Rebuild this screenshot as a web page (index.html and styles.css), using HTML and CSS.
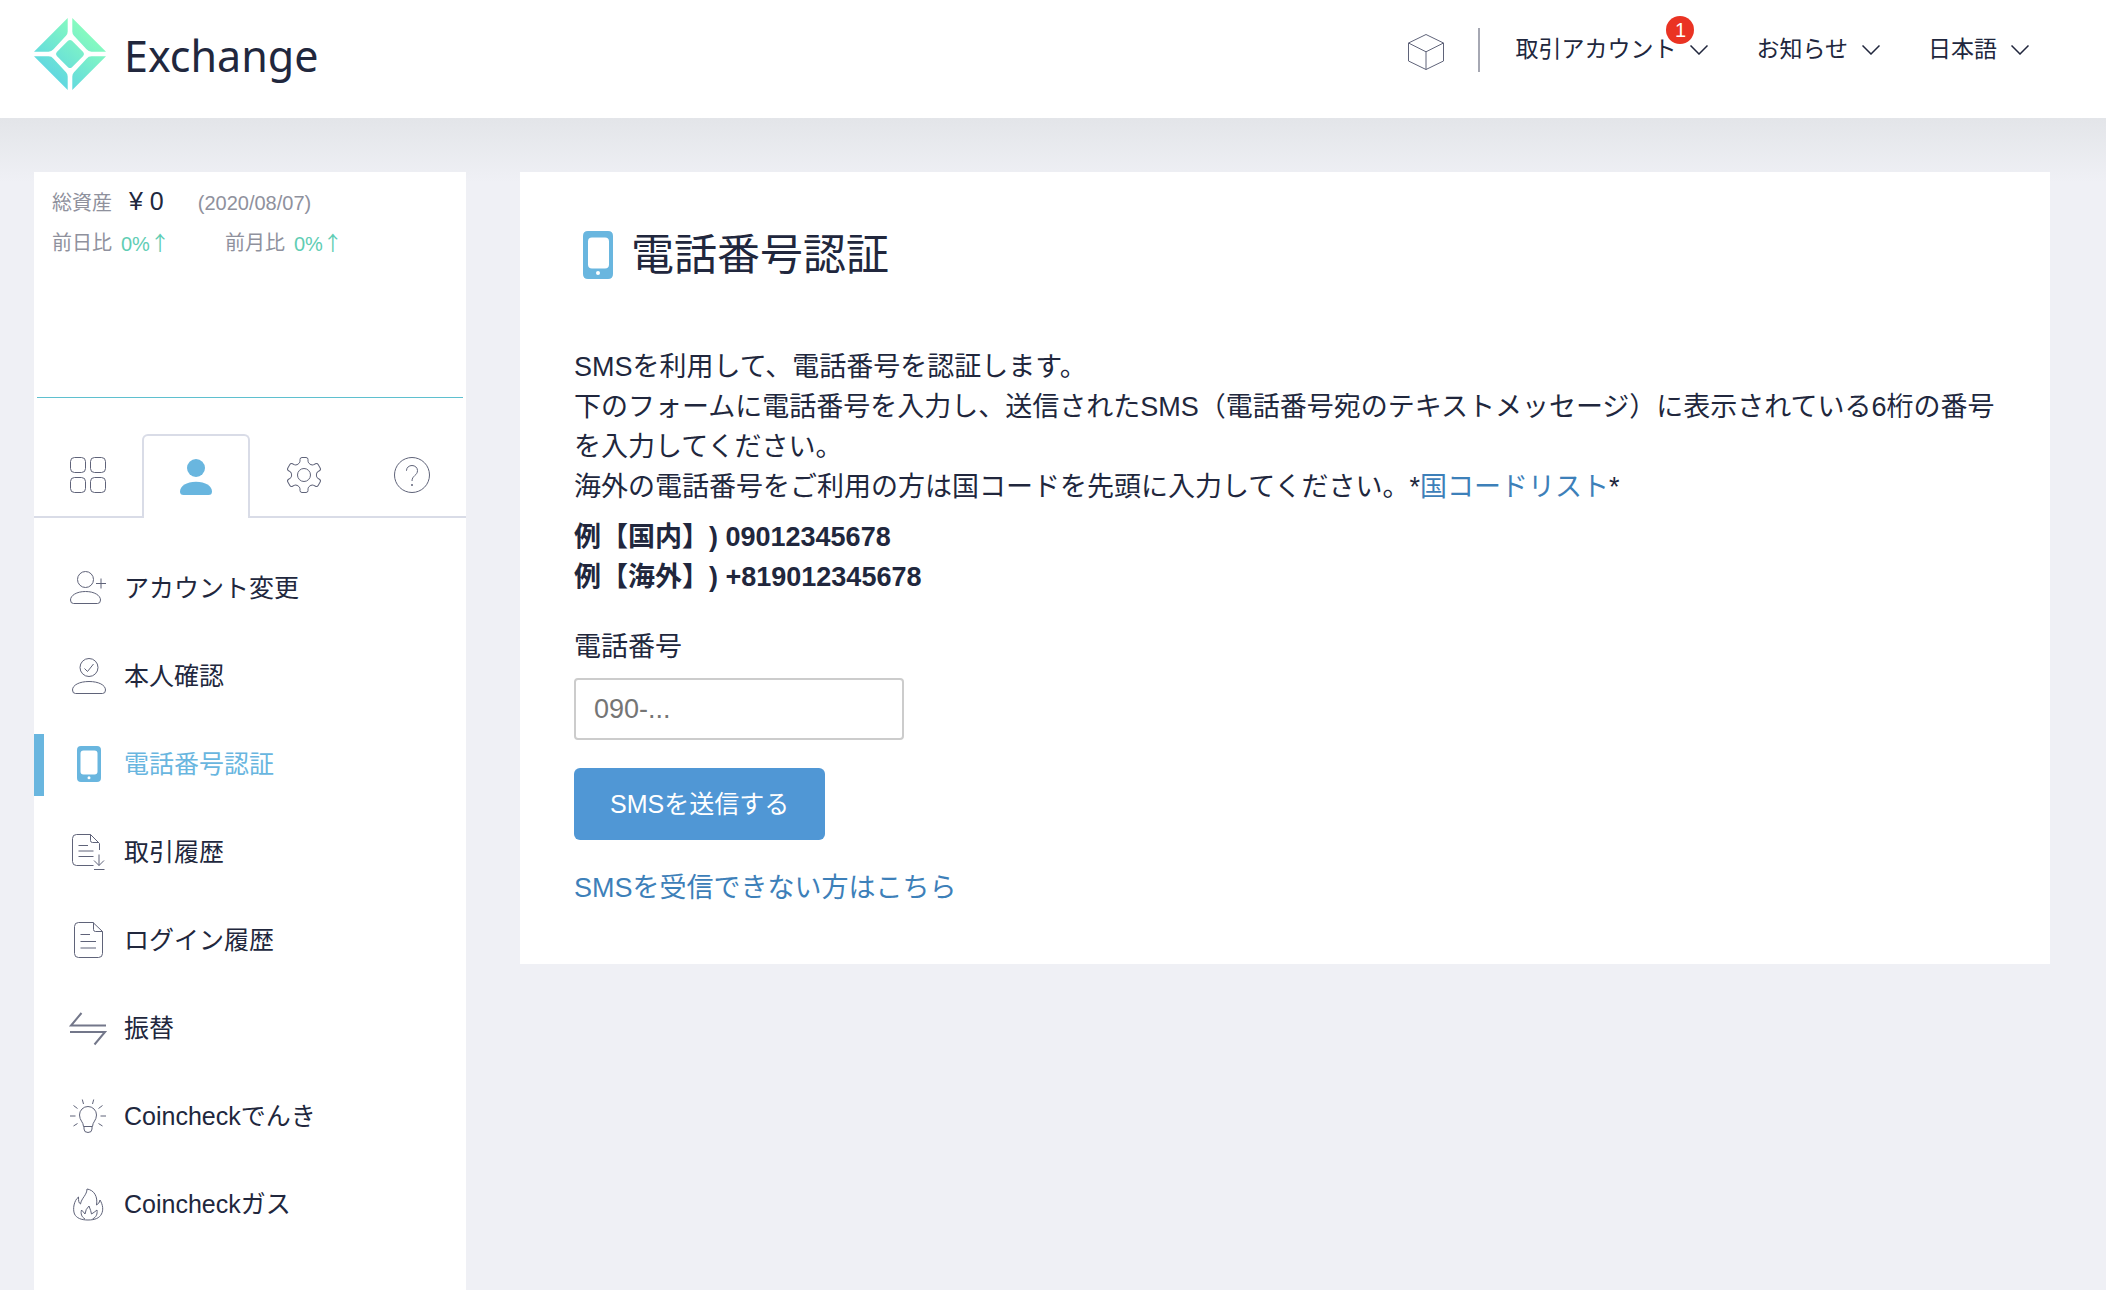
FILE: index.html
```html
<!DOCTYPE html>
<html lang="ja">
<head>
<meta charset="utf-8">
<meta name="viewport" content="width=device-width, initial-scale=1">
<title>電話番号認証 | Exchange</title>
<link rel="stylesheet" href="styles.css">
</head>
<body>
<header class="header">
  <a class="logo" href="#">
    <svg class="logo-mark" viewBox="0 0 72 72" aria-hidden="true">
      <defs>
        <linearGradient id="mark" gradientUnits="userSpaceOnUse" x1="54" y1="14" x2="18" y2="56">
          <stop offset="0" stop-color="#86fbbf"/>
          <stop offset="1" stop-color="#62d9df"/>
        </linearGradient>
      </defs>
      <g fill="url(#mark)">
        <path d="M33.7 0V13.5Q33.7 16 32 17.8L19.5 31.3Q17.5 33.7 14.5 33.7H0Z"/>
        <path d="M38.3 0V13.5Q38.3 16 40 17.8L52.5 31.3Q54.5 33.7 57.5 33.7H72Z"/>
        <path d="M33.7 72V58.5Q33.7 56 32 54.2L19.5 40.7Q17.5 38.3 14.5 38.3H0Z"/>
        <path d="M38.3 72V58.5Q38.3 56 40 54.2L52.5 40.7Q54.5 38.3 57.5 38.3H72Z"/>
        <path d="M34 22.8Q36 21 38 22.8L49.2 34Q51 36 49.2 38L38 49.2Q36 51 34 49.2L22.8 38Q21 36 22.8 34Z"/>
      </g>
    </svg>
    <span class="logo-text">Exchange</span>
  </a>
  <nav class="nav" aria-label="グローバル">
    <a class="nav-cube" href="#" aria-label="ブロック">
      <svg class="icon" viewBox="0 0 36 36" aria-hidden="true"><path d="M18 .5L35.5 9V27L18 35.5L.5 27V9ZM.5 9L18 17.8L35.5 9M18 17.8V35.5"/></svg>
    </a>
    <div class="nav-menus">
      <button class="nav-item" type="button">
        <span class="nav-label">取引アカウント<span class="badge">1</span></span>
        <svg class="chevron" viewBox="0 0 18 10" aria-hidden="true"><path d="M.5 .5L9 9L17.5 .5"/></svg>
      </button>
      <button class="nav-item" type="button">
        <span class="nav-label">お知らせ</span>
        <svg class="chevron" viewBox="0 0 18 10" aria-hidden="true"><path d="M.5 .5L9 9L17.5 .5"/></svg>
      </button>
      <button class="nav-item" type="button">
        <span class="nav-label">日本語</span>
        <svg class="chevron" viewBox="0 0 18 10" aria-hidden="true"><path d="M.5 .5L9 9L17.5 .5"/></svg>
      </button>
    </div>
  </nav>
</header>

<div class="page">
  <aside class="sidebar">
    <div class="assets">
      <div class="assets-row assets-total">
        <span>総資産</span>
        <span class="amount">¥ 0</span>
        <span class="date">(2020/08/07)</span>
      </div>
      <div class="assets-row assets-diff">
        <span class="diff">前日比 <span class="up">0%<span class="arrow">↑</span></span></span>
        <span class="diff">前月比 <span class="up">0%<span class="arrow">↑</span></span></span>
      </div>
    </div>
    <div class="tabs">
      <button class="tab" type="button" aria-label="メニュー">
        <svg class="icon" viewBox="0 0 36 36" aria-hidden="true"><rect x=".5" y=".5" width="15" height="15" rx="4"/><rect x="20.5" y=".5" width="15" height="15" rx="4"/><rect x=".5" y="20.5" width="15" height="15" rx="4"/><rect x="20.5" y="20.5" width="15" height="15" rx="4"/></svg>
      </button>
      <button class="tab tab-active" type="button" aria-label="アカウント">
        <svg class="icon icon-solid" viewBox="0 0 36 36" aria-hidden="true"><circle cx="18" cy="9" r="9"/><path d="M2 32.5C2 27 8.5 22.7 18 22.7S34 27 34 32.5Q34 36 30.5 36H5.5Q2 36 2 32.5Z"/></svg>
      </button>
      <button class="tab" type="button" aria-label="設定">
        <svg class="icon" viewBox="-18 -18 36 36" aria-hidden="true">
          <defs><path id="tooth" d="M-6.2-10.7Q-4-11.97-4-13.8V-15.5Q-4-17.5-2-17.5H2Q4-17.5 4-15.5V-13.8Q4-11.97 6.2-10.7"/></defs>
          <use href="#tooth"/><use href="#tooth" transform="rotate(60)"/><use href="#tooth" transform="rotate(120)"/><use href="#tooth" transform="rotate(180)"/><use href="#tooth" transform="rotate(240)"/><use href="#tooth" transform="rotate(300)"/>
          <circle r="6.5"/>
        </svg>
      </button>
      <button class="tab" type="button" aria-label="ヘルプ">
        <svg class="icon" viewBox="0 0 36 36" aria-hidden="true"><circle cx="18" cy="18" r="17.5"/><path d="M12.5 14V13.5C12.5 10.5 15 8.5 18 8.5S23.5 10.6 23.5 13.6C23.5 18.5 18 18.5 18 24"/><circle class="dot" cx="18" cy="28" r="1"/></svg>
      </button>
    </div>
    <nav class="menu" aria-label="アカウントメニュー">
      <a class="menu-item" href="#">
        <svg class="icon" viewBox="0 0 36 36" aria-hidden="true"><circle cx="15.5" cy="9.5" r="8"/><path d="M.5 30C.5 25.5 6.5 21.5 15.5 21.5S30.5 25.5 30.5 30Q30.5 33.5 27.5 33.5H3.5Q.5 33.5 .5 30ZM26 13.5H36M31 8.5V18.5"/></svg>
        アカウント変更
      </a>
      <a class="menu-item" href="#">
        <svg class="icon" viewBox="0 0 36 36" aria-hidden="true"><circle cx="19" cy="9.5" r="9"/><path d="M14.5 10.5L17.5 13.5L23.5 6M2.5 32C2.5 27 9.5 23.5 19 23.5S35.5 27 35.5 32Q35.5 35.5 32.5 35.5H5.5Q2.5 35.5 2.5 32Z"/></svg>
        本人確認
      </a>
      <a class="menu-item menu-item-active" href="#" aria-current="page">
        <svg class="icon icon-solid" viewBox="0 0 36 36" aria-hidden="true"><path fill-rule="evenodd" d="M11 0H27Q31 0 31 4V32Q31 36 27 36H11Q7 36 7 32V4Q7 0 11 0ZM13.5 4.5Q10.5 4.5 10.5 7.5V25.5Q10.5 28.5 13.5 28.5H24.5Q27.5 28.5 27.5 25.5V7.5Q27.5 4.5 24.5 4.5ZM19 30.2A1.5 1.5 0 1 0 19 33.2A1.5 1.5 0 1 0 19 30.2Z"/></svg>
        電話番号認証
      </a>
      <a class="menu-item" href="#">
        <svg class="icon" viewBox="0 0 36 36" aria-hidden="true"><path d="M23.5 31.5H6.5Q2.5 31.5 2.5 27.5V4.5Q2.5 .5 6.5 .5H20.5L29.5 9.5V16M20.5 .5V6.5Q20.5 8.5 22.5 8.5H29M8.5 11.5H18M8.5 17H23.5M8.5 22.5H23.5M29 20.5V31.5M24 26.5L29 31.5L34 26.5M24 35.5H34.5"/></svg>
        取引履歴
      </a>
      <a class="menu-item" href="#">
        <svg class="icon" viewBox="0 0 36 36" aria-hidden="true"><path d="M23 .5H8.5Q4.5 .5 4.5 4.5V31.5Q4.5 35.5 8.5 35.5H28.5Q32.5 35.5 32.5 31.5V9.5ZM23.5 .5V7.5Q23.5 9.5 25.5 9.5H32.5M10.5 12.5H20M10.5 19.5H26M10.5 26H26"/></svg>
        ログイン履歴
      </a>
      <a class="menu-item" href="#">
        <svg class="icon icon-bold" viewBox="0 0 36 36" aria-hidden="true"><path d="M36 15.5H1L11.5 3M0 22H35L24.5 34.5"/></svg>
        振替
      </a>
      <a class="menu-item" href="#">
        <svg class="icon" viewBox="0 0 36 36" aria-hidden="true"><path d="M13.5 28.5C13.5 24 9.5 22.5 9.5 17A8.5 8.5 0 0 1 26.5 17C26.5 22.5 22.5 24 22.5 28.5ZM14 28.5V31Q14 34.5 18 34.5T22 31V28.5M13.5 6L12.3 1.5M22.5 6L23.7 1.5M7.5 10.5L3.5 7.5M28.5 10.5L32.5 7.5M5.5 18H0M30.5 18H36M7.5 25.5L3.5 28M28.5 25.5L32.5 28"/></svg>
        Coincheckでんき
      </a>
      <a class="menu-item" href="#">
        <svg class="icon" viewBox="0 0 36 36" aria-hidden="true"><path d="M17 3C24 4 28 10.500 26.500 19Q29.500 17.500 30 14C33 19 33.500 24 31.500 28C29.500 32 25 34 18 34S6.500 32 4.500 28C2.500 23 4 14.500 8.500 11C8.500 14.500 8.500 17 10.500 18C11.500 12 17 9 17 3ZM15 33C11.500 31 10.500 27.500 11.500 24Q13.500 26 15 28Q15.500 23 19 20Q21 25 21.500 28Q24 26.500 27 24C27.500 28 26.500 31 22.500 33"/></svg>
        Coincheckガス
      </a>
    </nav>
  </aside>

  <main class="card">
    <h1 class="title">
      <svg class="title-icon" viewBox="0 0 30 48" aria-hidden="true"><path fill-rule="evenodd" d="M5 0H25Q30 0 30 5V43Q30 48 25 48H5Q0 48 0 43V5Q0 0 5 0ZM9 6.500Q5 6.500 5 10.500V33.500Q5 37.500 9 37.500H22Q26 37.500 26 33.500V10.500Q26 6.500 22 6.500ZM15 40A2 2 0 1 0 15 44A2 2 0 1 0 15 40Z"/></svg>
      電話番号認証
    </h1>
    <p class="text">SMSを利用して、電話番号を認証します。<br>下のフォームに電話番号を入力し、送信されたSMS（電話番号宛のテキストメッセージ）に表示されている6桁の番号を入力してください。<br>海外の電話番号をご利用の方は国コードを先頭に入力してください。*<a class="link" href="#">国コードリスト</a>*</p>
    <p class="examples">例【国内】) 09012345678<br>例【海外】) +819012345678</p>
    <form class="form">
      <label class="label" for="phone">電話番号</label>
      <input class="input" id="phone" type="tel" placeholder="090-...">
      <button class="submit" type="submit">SMSを送信する</button>
    </form>
    <a class="link" href="#">SMSを受信できない方はこちら</a>
  </main>
</div>
</body>
</html>
```

FILE: styles.css
```css
* {
  box-sizing: border-box;
}

body {
  margin: 0;
  min-height: 100vh;
  display: flex;
  flex-direction: column;
  background: #eff0f5;
  color: #21273d;
  font-family: "Liberation Sans", "Noto Sans CJK JP", sans-serif;
  font-size: 27px;
  line-height: 40px;
  text-spacing-trim: space-all;
}

button,
input {
  font-family: inherit;
  color: inherit;
}

button {
  border: 0;
  padding: 0;
  background: none;
  cursor: pointer;
}

a {
  color: inherit;
  text-decoration: none;
}

.link {
  color: #3d80b9;
}

.icon {
  display: block;
  flex: none;
  width: 36px;
  height: 36px;
  overflow: visible;
  fill: none;
  stroke: #5f6379;
}

.icon-bold {
  stroke: #73778a;
  stroke-width: 2;
}

.icon-solid {
  fill: #69b6df;
  stroke: none;
}

.dot {
  fill: #5f6379;
  stroke: none;
}

/* Header */

.header {
  display: flex;
  justify-content: space-between;
  align-items: flex-start;
  padding: 18px 77px 28px 34px;
  background: #fff;
}

.logo {
  display: flex;
  align-items: center;
  gap: 18px;
}

.logo-mark {
  display: block;
  width: 72px;
  height: 72px;
}

.logo-text {
  padding-top: 4px;
  font-family: "Noto Sans", sans-serif;
  font-size: 43px;
  line-height: 60px;
}

.nav {
  display: flex;
  align-items: center;
  gap: 34px;
  padding-top: 10px;
}

.nav-cube {
  padding-top: 4px;
}

.nav-menus {
  display: flex;
  gap: 48px;
  height: 44px;
  padding-left: 35px;
  border-left: 2px solid #a6a8b3;
}

.nav-item {
  display: flex;
  align-items: center;
  gap: 14px;
  font-size: 23px;
  line-height: 40px;
}

.nav-label {
  position: relative;
  padding-bottom: 2px;
}

.badge {
  position: absolute;
  top: -13px;
  right: -18px;
  width: 28px;
  height: 28px;
  border-radius: 14px;
  background: #ea3323;
  color: #fff;
  font-size: 20px;
  line-height: 28px;
  text-align: center;
}

.chevron {
  display: block;
  width: 18px;
  height: 10px;
  fill: none;
  stroke: #21273d;
  stroke-width: 1.5;
}

/* Page */

.page {
  flex: 1;
  display: flex;
  align-items: stretch;
  gap: 54px;
  padding: 54px 56px 0 34px;
  background: linear-gradient(#e3e5e9, #eff0f5 64px);
}

.sidebar {
  flex: none;
  width: 432px;
  background: #fff;
}

.assets {
  height: 226px;
  margin: 0 3px;
  padding: 9px 15px;
  border-bottom: 1px solid #5fc0cf;
  color: #8f919d;
  font-size: 20px;
}

.assets-row {
  display: flex;
  align-items: baseline;
}

.assets-total {
  gap: 17px;
}

.amount {
  color: #21273d;
  font-size: 25px;
}

.date {
  padding-left: 17px;
}

.assets-diff {
  gap: 55px;
}

.diff {
  display: flex;
  gap: 9px;
}

.up {
  color: #5fcdb4;
}

.arrow {
  font-family: "Noto Sans CJK JP", sans-serif;
}

.tabs {
  display: grid;
  grid-template-columns: repeat(4, 1fr);
  margin-top: 36px;
}

.tab {
  display: flex;
  justify-content: center;
  align-items: center;
  height: 84px;
  border-bottom: 2px solid #d9dce7;
}

.tab-active {
  border: 2px solid #d9dce7;
  border-bottom: 0;
  border-radius: 6px 6px 0 0;
}

.menu {
  display: flex;
  flex-direction: column;
  gap: 26px;
  padding: 40px 0;
}

.menu-item {
  display: flex;
  align-items: center;
  gap: 18px;
  height: 62px;
  padding: 0 0 2px 26px;
  border-left: 10px solid transparent;
  font-size: 25px;
}

.menu-item-active {
  border-left-color: #69b6df;
  color: #69b6df;
}

/* Phone verification */

.card {
  flex: 1;
  align-self: flex-start;
  min-width: 0;
  padding: 53px 40px 56px 54px;
  background: #fff;
}

.title {
  display: flex;
  align-items: center;
  gap: 18px;
  margin: 0 0 62px;
  padding-left: 9px;
  font-size: 43px;
  font-weight: 400;
  line-height: 60px;
}

.title-icon {
  display: block;
  width: 30px;
  height: 48px;
  fill: #69b6df;
}

.text {
  margin: 0 0 10px;
}

.examples {
  margin: 0 0 30px;
  font-weight: 700;
}

.form {
  display: flex;
  flex-direction: column;
  align-items: flex-start;
  margin-bottom: 28px;
}

.label {
  margin-bottom: 11px;
}

.input {
  width: 330px;
  height: 62px;
  margin-bottom: 28px;
  padding: 0 18px;
  border: 2px solid #ccc;
  border-radius: 4px;
  background: #fff;
  font-size: 27px;
}

.input::placeholder {
  color: #757575;
}

.submit {
  padding: 16px 36px;
  border-radius: 6px;
  background: #5097d5;
  color: #fff;
  font-size: 25px;
  line-height: 40px;
}
```
